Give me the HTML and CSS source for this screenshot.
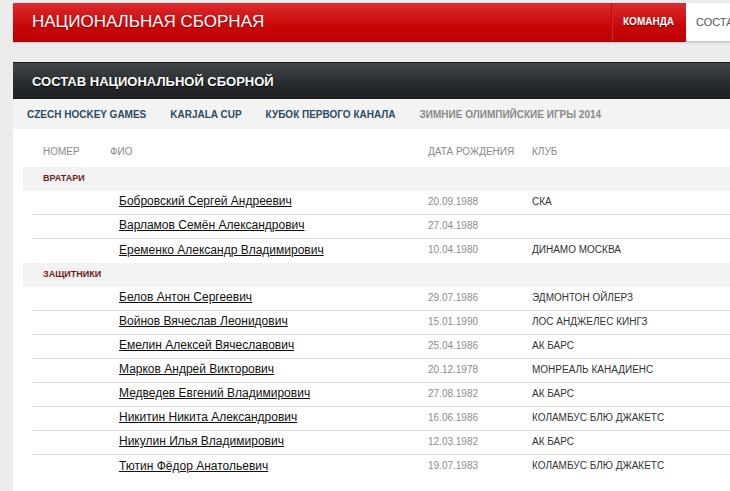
FILE: index.html
```html
<!DOCTYPE html>
<html lang="ru">

<head>
  <meta charset="UTF-8" />
  <meta name="viewport" content="width=device-width, initial-scale=1.0" />
  <title>Национальная сборная</title>
  <link rel="stylesheet" href="styles.css">
</head>

<body>
  <div class="page">
    <div class="topbar">
      <h1>НАЦИОНАЛЬНАЯ СБОРНАЯ</h1>
      <ul class="topnav">
        <li><a href="#">КОМАНДА</a></li>
        <li class="active"><a href="#">СОСТАВ</a></li>
      </ul>
    </div>

    <div class="section">
      <div class="section-head">СОСТАВ НАЦИОНАЛЬНОЙ СБОРНОЙ</div>
      <ul class="tabs">
        <li><a href="#">CZECH HOCKEY GAMES</a></li>
        <li><a href="#">KARJALA CUP</a></li>
        <li><a href="#">КУБОК ПЕРВОГО КАНАЛА</a></li>
        <li class="current"><a href="#">ЗИМНИЕ ОЛИМПИЙСКИЕ ИГРЫ 2014</a></li>
      </ul>

      <div class="roster">
        <div class="row head">
          <span class="num">НОМЕР</span>
          <span class="name">ФИО</span>
          <span class="date">ДАТА РОЖДЕНИЯ</span>
          <span class="club">КЛУБ</span>
        </div>

        <div class="group">ВРАТАРИ</div>
        <div class="row">
          <span class="num"></span>
          <span class="name"><a href="#">Бобровский Сергей Андреевич</a></span>
          <span class="date">20.09.1988</span>
          <span class="club">СКА</span>
        </div>
        <div class="row">
          <span class="num"></span>
          <span class="name"><a href="#">Варламов Семён Александрович</a></span>
          <span class="date">27.04.1988</span>
          <span class="club"></span>
        </div>
        <div class="row last">
          <span class="num"></span>
          <span class="name"><a href="#">Еременко Александр Владимирович</a></span>
          <span class="date">10.04.1980</span>
          <span class="club">ДИНАМО МОСКВА</span>
        </div>

        <div class="group">ЗАЩИТНИКИ</div>
        <div class="row">
          <span class="num"></span>
          <span class="name"><a href="#">Белов Антон Сергеевич</a></span>
          <span class="date">29.07.1986</span>
          <span class="club">ЭДМОНТОН ОЙЛЕРЗ</span>
        </div>
        <div class="row">
          <span class="num"></span>
          <span class="name"><a href="#">Войнов Вячеслав Леонидович</a></span>
          <span class="date">15.01.1990</span>
          <span class="club">ЛОС АНДЖЕЛЕС КИНГЗ</span>
        </div>
        <div class="row">
          <span class="num"></span>
          <span class="name"><a href="#">Емелин Алексей Вячеславович</a></span>
          <span class="date">25.04.1986</span>
          <span class="club">АК БАРС</span>
        </div>
        <div class="row">
          <span class="num"></span>
          <span class="name"><a href="#">Марков Андрей Викторович</a></span>
          <span class="date">20.12.1978</span>
          <span class="club">МОНРЕАЛЬ КАНАДИЕНС</span>
        </div>
        <div class="row">
          <span class="num"></span>
          <span class="name"><a href="#">Медведев Евгений Владимирович</a></span>
          <span class="date">27.08.1982</span>
          <span class="club">АК БАРС</span>
        </div>
        <div class="row">
          <span class="num"></span>
          <span class="name"><a href="#">Никитин Никита Александрович</a></span>
          <span class="date">16.06.1986</span>
          <span class="club">КОЛАМБУС БЛЮ ДЖАКЕТС</span>
        </div>
        <div class="row">
          <span class="num"></span>
          <span class="name"><a href="#">Никулин Илья Владимирович</a></span>
          <span class="date">12.03.1982</span>
          <span class="club">АК БАРС</span>
        </div>
        <div class="row last">
          <span class="num"></span>
          <span class="name"><a href="#">Тютин Фёдор Анатольевич</a></span>
          <span class="date">19.07.1983</span>
          <span class="club">КОЛАМБУС БЛЮ ДЖАКЕТС</span>
        </div>
      </div>
    </div>
  </div>
</body>

</html>
```

FILE: styles.css
```css
* {
  box-sizing: border-box;
}

body {
  margin: 0;
  background: #ececec;
  font-family: "Liberation Sans", Arial, sans-serif;
  overflow: hidden;
}

ul {
  margin: 0;
  padding: 0;
  list-style: none;
}

a {
  text-decoration: none;
}

.page {
  width: 960px;
  margin-left: 13px;
  padding-top: 3px;
}

/* верхняя красная полоса */
.topbar {
  height: 39px;
  display: flex;
  background: linear-gradient(#dd2c2e, #c80708 60%, #c00000);
  border-bottom: 1px solid #9c0a0b;
  box-shadow: 0 1px 2px rgba(0, 0, 0, 0.15);
}

.topbar h1 {
  flex: 0 0 598px;
  margin: 0;
  padding-left: 19px;
  font-size: 17px;
  font-weight: normal;
  line-height: 38px;
  color: #fff;
  text-shadow: 0 1px 1px rgba(80, 0, 0, 0.6);
}

.topnav {
  display: flex;
}

.topnav li a {
  display: block;
  height: 38px;
  line-height: 38px;
  padding: 0 12px 0 11px;
  font-size: 10px;
  font-weight: bold;
  color: #fff;
  text-shadow: 0 1px 1px rgba(60, 0, 0, 0.7);
  border-left: 1px solid #a8110f;
  box-shadow: inset 1px 0 0 #d42a2a;
}

.topnav li.active a {
  height: 39px;
  padding: 0 12px 0 10px;
  background: #fff;
  color: #555;
  font-size: 11px;
  font-weight: normal;
  text-shadow: none;
  border-left: none;
  box-shadow: none;
  border-bottom: 1px solid #c9c9c9;
}

.section {
  margin-top: 20px;
  background: #fff;
  min-height: 500px;
}

.section-head {
  height: 37px;
  line-height: 37px;
  padding-left: 19px;
  background: linear-gradient(#41464a, #2a2d30 55%, #1c1e20);
  border-top: 1px solid #15171a;
  font-size: 13px;
  font-weight: bold;
  color: #fff;
  text-shadow: 0 1px 1px #000;
}

.tabs {
  display: flex;
  height: 30px;
  padding-left: 2px;
  background: #f3f3f3;
}

.tabs li a {
  display: block;
  line-height: 31px;
  padding: 0 12px;
  font-size: 10px;
  font-weight: bold;
  color: #2c4a64;
}

.tabs li.current a {
  color: #8a8a8a;
}

.roster {
  padding: 7px 0 0 10px;
}

.row {
  display: grid;
  grid-template-columns: 86px 309px 104px 1fr;
  align-items: center;
  height: 24px;
  padding-bottom: 3px;
  margin-left: 10px;
  border-bottom: 1px solid #dcdcdc;
  font-size: 10px;
}

.row.last {
  border-bottom: none;
}

.row.head {
  height: 31px;
  padding-bottom: 1px;
  border-bottom: none;
}

.row .num {
  padding-left: 10px;
}

.row .name a {
  font-size: 12px;
  color: #111;
  text-decoration: underline;
}

.row .date {
  color: #8c8c8c;
}

.row .club {
  color: #333;
}

.row.head span {
  color: #8a8a8a;
}

.row.head .name {
  margin-left: -9px;
}

.group {
  height: 24px;
  line-height: 22px;
  padding-left: 20px;
  background: #f2f2f2;
  font-size: 9px;
  font-weight: bold;
  color: #6b1c22;
}
```
